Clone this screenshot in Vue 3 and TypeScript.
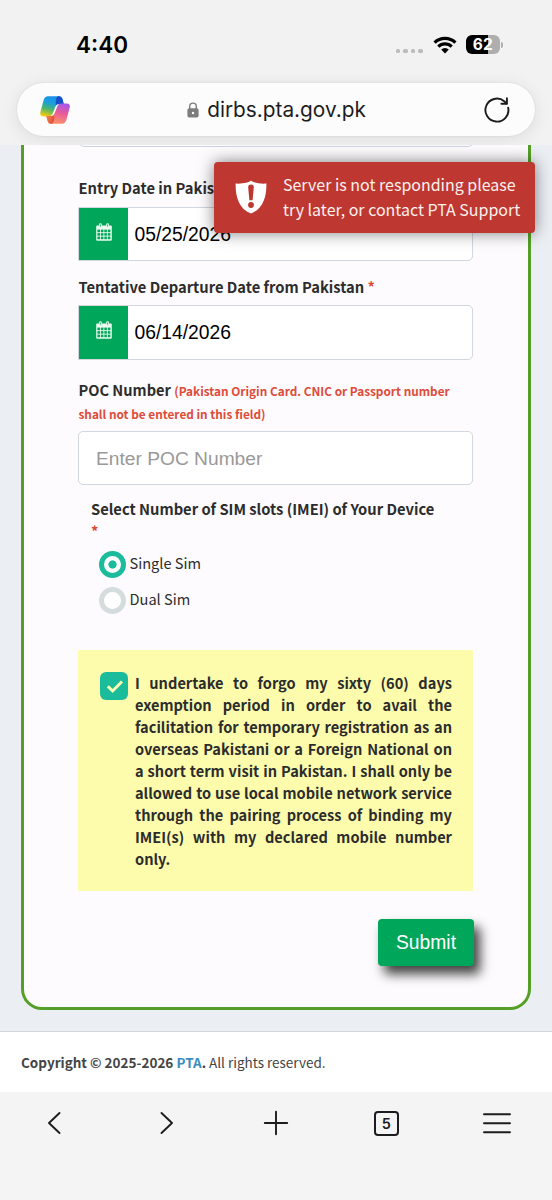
<script setup lang="ts">
import { ref } from 'vue'

interface DateField {
  label: string
  required: boolean
  value: string
}

const dateFields: DateField[] = [
  { label: 'Entry Date in Pakistan', required: true, value: '05/25/2026' },
  { label: 'Tentative Departure Date from Pakistan', required: true, value: '06/14/2026' },
]

const simOptions: string[] = ['Single Sim', 'Dual Sim']
const selectedSim = ref<string>('Single Sim')

const undertaking: string[] = [
  'I undertake to forgo my sixty (60) days',
  'exemption period in order to avail the',
  'facilitation for temporary registration as an',
  'overseas Pakistani or a Foreign National on',
  'a short term visit in Pakistan. I shall only be',
  'allowed to use local mobile network service',
  'through the pairing process of binding my',
  'IMEI(s) with my declared mobile number',
  'only.',
]
</script>

<template>
  <div class="screen">
    <header class="chrome">
      <div class="status">
        <span class="clock">4:40</span>
        <div class="indicators">
          <span class="dots"><i v-for="n in 4" :key="n"></i></span>
          <svg class="wifi" width="24" height="18" viewBox="0 0 24 18">
            <path d="M1.6 6.6A15 15 0 0 1 22.4 6.6" fill="none" stroke="#000" stroke-width="3.3" />
            <path d="M5.3 10.6A9.6 9.6 0 0 1 18.7 10.6" fill="none" stroke="#000" stroke-width="3.1" />
            <path d="M12 17.4L8.2 13.6A5.4 5.4 0 0 1 15.8 13.6Z" fill="#000" />
          </svg>
          <span class="battery"><b>62</b></span>
          <span class="nub"></span>
        </div>
      </div>
      <div class="address">
        <svg class="copilot" width="30" height="28" viewBox="0 0 91 85">
          <defs>
            <linearGradient id="cool" x1="0.6" y1="0" x2="0.3" y2="1">
              <stop offset="0" stop-color="#1b8fe8" />
              <stop offset="0.35" stop-color="#1a9fdc" />
              <stop offset="0.65" stop-color="#4cb66a" />
              <stop offset="1" stop-color="#f2cb10" />
            </linearGradient>
            <linearGradient id="warm" x1="0.75" y1="0" x2="0.4" y2="1">
              <stop offset="0" stop-color="#a456ea" />
              <stop offset="0.45" stop-color="#e85a9c" />
              <stop offset="1" stop-color="#ff9464" />
            </linearGradient>
            <linearGradient id="fold" x1="0" y1="0" x2="1" y2="0.4">
              <stop offset="0" stop-color="#f58a4a" />
              <stop offset="1" stop-color="#e2503c" />
            </linearGradient>
          </defs>
          <path d="M24 1H58Q66 1 69 12L72 24H57Q50 24 47 32L38 55Q35 62 26 62H10Q-2 61 1 49L11 12Q15 1 24 1Z" fill="url(#cool)" />
          <path d="M54 1H58Q66 1 69 12L72 24H57Q50 24 48 28Q46 8 54 1Z" fill="#1a4fc9" />
          <path d="M67 84H33Q25 84 22 73L19 61H34Q41 61 44 53L53 30Q56 23 65 23H81Q93 24 90 36L80 73Q76 84 67 84Z" fill="url(#warm)" />
          <path d="M37 84H33Q25 84 22 73L19 61H34Q41 61 43 57Q45 77 37 84Z" fill="url(#fold)" />
        </svg>
        <div class="url">
          <svg width="12" height="16" viewBox="0 0 12 16">
            <path d="M2.7 7V4.4a3.3 3.3 0 0 1 6.6 0V7" fill="none" stroke="#7d7d7f" stroke-width="1.4" />
            <rect x="0.4" y="6.2" width="11.2" height="9.4" rx="1.8" fill="#7d7d7f" />
            <circle cx="6" cy="11" r="1.2" fill="#fff" />
          </svg>
          <span>dirbs.pta.gov.pk</span>
        </div>
        <svg class="reload" width="28" height="28" viewBox="0 0 28 28" fill="none" stroke="#1c1c1e" stroke-width="1.9" stroke-linecap="round" stroke-linejoin="round">
          <path d="M25.2 11.8A11.5 11.5 0 1 1 21.2 5.2L23.7 7.6" />
          <path d="M23.9 2.2V7.8H18.4" />
        </svg>
      </div>
    </header>

    <main class="page">
      <section class="card">
        <div class="clipped-input"></div>

        <div v-for="field in dateFields" :key="field.label" class="field">
          <label class="label">{{ field.label }}<em v-if="field.required"> *</em></label>
          <div class="input-group">
            <span class="addon">
              <svg width="16" height="18" viewBox="0 0 16 18">
                <rect x="0.2" y="2.4" width="15.6" height="15.4" rx="1.2" fill="#e9f9ef" />
                <rect x="3" y="0.2" width="2.8" height="4.6" rx="1.3" fill="#e9f9ef" />
                <rect x="10.2" y="0.2" width="2.8" height="4.6" rx="1.3" fill="#e9f9ef" />
                <path d="M4.4 1.4v2.4M11.6 1.4v2.4" stroke="#00a65a" stroke-width="0.8" />
                <g fill="#00a65a">
                  <template v-for="row in 3" :key="row">
                    <rect v-for="col in 4" :key="col" :x="1.4 + (col - 1) * 3.45" :y="6.6 + (row - 1) * 3.5" width="2.6" height="2.6" />
                  </template>
                </g>
              </svg>
            </span>
            <span class="value">{{ field.value }}</span>
          </div>
        </div>

        <div class="poc">
          <div class="poc-label">
            <div><span class="poc-title">POC Number</span> <small>(Pakistan Origin Card. CNIC or Passport number</small></div>
            <div><small>shall not be entered in this field)</small></div>
          </div>
          <div class="text-input">Enter POC Number</div>
        </div>

        <div class="sim">
          <div class="sim-label">Select Number of SIM slots (IMEI) of Your Device</div>
          <div class="sim-star">*</div>
          <div v-for="option in simOptions" :key="option" class="radio" @click="selectedSim = option">
            <span class="ring" :class="{ on: selectedSim === option }"></span>
            <span class="option">{{ option }}</span>
          </div>
        </div>

        <div class="undertaking">
          <span class="check">
            <svg width="28" height="28" viewBox="0 0 28 28">
              <path d="M7.8 14.2L12.6 19L22 9.4" fill="none" stroke="#fdfcb0" stroke-width="2.9" />
            </svg>
          </span>
          <div class="terms">
            <p v-for="line in undertaking" :key="line">{{ line }}</p>
          </div>
        </div>

        <div class="actions">
          <button type="button" class="submit">Submit</button>
        </div>
      </section>

      <footer class="footer">
        <span><b>Copyright © 2025-2026 <a>PTA</a>.</b> All rights reserved.</span>
      </footer>

      <div class="toast">
        <svg width="32" height="34" viewBox="0 0 32 34">
          <path d="M16 0.6C18 2.6 24 4 31.4 3.6C31.6 17 28 28.5 16 33.6C4 28.5 0.4 17 0.6 3.6C8 4 14 2.6 16 0.6Z" fill="#fff" />
          <path d="M13.2 7.4a2.8 2.8 0 0 1 5.6 0L17.6 20.2h-3.2Z" fill="#bd362f" />
          <circle cx="16" cy="25" r="2.9" fill="#bd362f" />
        </svg>
        <div class="message">
          <div>Server is not responding please</div>
          <div class="second">try later, or contact PTA Support</div>
        </div>
      </div>
    </main>

    <nav class="toolbar">
      <span><svg width="24" height="26" viewBox="0 0 24 26"><path d="M16.5 3L6 13L16.5 23" /></svg></span>
      <span><svg width="24" height="26" viewBox="0 0 24 26"><path d="M7.5 3L18 13L7.5 23" /></svg></span>
      <span><svg width="26" height="26" viewBox="0 0 26 26"><path d="M1.8 13H24.2M13 1.8V24.2" /></svg></span>
      <span><i class="tabs">5</i></span>
      <span><svg width="28" height="26" viewBox="0 0 28 26"><path d="M1 4.2H27M1 13.2H27M1 22.2H27" /></svg></span>
    </nav>
  </div>
</template>

<style>
body {
  margin: 0;
}
</style>

<style scoped>
.screen {
  width: 552px;
  height: 1200px;
  display: flex;
  flex-direction: column;
  overflow: hidden;
  background: #f4f4f4;
  color: #2c2c2c;
  font-family: "Noto Sans CJK SC", "Open Sans", sans-serif;
  font-size: 14.6px;
}

.chrome {
  height: 145px;
  flex: none;
  box-sizing: border-box;
  background: #f3f2f3;
  overflow: hidden;
}

.status {
  height: 83px;
  display: flex;
  justify-content: space-between;
  align-items: flex-start;
  padding: 0 49px 0 76px;
  box-sizing: border-box;
  font-family: Inter, sans-serif;
}

.clock {
  font-size: 22.5px;
  line-height: 28px;
  margin-top: 31px;
  font-weight: 600;
  color: #000;
}

.indicators {
  display: flex;
  align-items: center;
  height: 20px;
  margin-top: 34.5px;
}

.dots {
  display: flex;
  gap: 3px;
  margin: 13px 10px 0 0;
}

.dots i {
  width: 4.5px;
  height: 4.5px;
  border-radius: 1.5px;
  background: #bdbcbd;
}

.wifi {
  margin-right: 9px;
}

.battery {
  width: 34.5px;
  height: 19px;
  border-radius: 6px;
  background: linear-gradient(90deg, #000 64%, #aeaeae 64%);
  color: #fff;
  font-size: 15.5px;
  line-height: 19.5px;
  text-align: center;
}

.battery b {
  font-weight: 700;
}

.nub {
  width: 2px;
  height: 6px;
  margin-left: 1px;
  border-radius: 0 2px 2px 0;
  background: #aeaeae;
}

.address {
  height: 53px;
  margin: 0 17px;
  box-sizing: border-box;
  padding: 0 24px 0 23px;
  border-radius: 27px;
  background: #fcfcfc;
  box-shadow: 0 0 2px rgba(0, 0, 0, 0.1), 0 3px 18px rgba(0, 0, 0, 0.09);
  display: flex;
  align-items: center;
  justify-content: space-between;
}

.url {
  display: flex;
  align-items: center;
  gap: 8px;
  font-family: Inter, sans-serif;
  font-size: 20.8px;
  line-height: 28px;
  color: #1c1c1e;
}

.page {
  position: relative;
  height: 947px;
  flex: none;
  display: flex;
  flex-direction: column;
  overflow: hidden;
  background: #ebeff4;
}

.card {
  height: 865px;
  flex: none;
  box-sizing: border-box;
  margin: 0 21px;
  padding: 0 55px 0 54.5px;
  border: 3px solid #549f26;
  border-top: 0;
  border-radius: 0 0 21px 21px;
  background: #fdfbfd;
}

.clipped-input {
  height: 7px;
  margin-top: -5px;
  margin-bottom: 31px;
  border: 1px solid #cdd3de;
  border-top: 0;
  border-radius: 0 0 5px 5px;
  box-sizing: border-box;
}

.field {
  height: 98.5px;
}

.label {
  display: block;
  height: 28.5px;
  line-height: 20px;
  font-size: 14.72px;
  font-weight: 700;
  white-space: nowrap;
}

.label em {
  font-style: normal;
  color: #dd4b39;
}

.input-group {
  display: flex;
  height: 54.5px;
  width: 395px;
  margin-left: -0.5px;
  box-sizing: border-box;
  border: 1.5px solid #d2d6de;
  border-radius: 0 5px 5px 0;
  background: #fff;
}

.addon {
  width: 49px;
  background: #00a65a;
  display: flex;
  justify-content: center;
  align-items: center;
  padding-bottom: 4px;
  box-sizing: border-box;
}

.value {
  padding-left: 6.5px;
  font-family: "Liberation Sans", Arial, sans-serif;
  font-size: 19.3px;
  line-height: 53px;
  color: #000;
}

.poc {
  padding-top: 4px;
}

.poc-label {
  font-weight: 700;
  line-height: 22px;
  height: 51.5px;
  white-space: nowrap;
}

.poc-label small {
  font-size: 11.8px;
  color: #dd4b39;
}

.text-input {
  height: 54.5px;
  width: 395px;
  margin-left: -0.5px;
  box-sizing: border-box;
  border: 1.5px solid #d2d6de;
  border-radius: 5px;
  background: #fff;
  padding-left: 17px;
  font-family: "Liberation Sans", Arial, sans-serif;
  font-size: 19.2px;
  line-height: 53px;
  color: #999;
}

.sim {
  padding: 13px 0 0 12.5px;
  white-space: nowrap;
}

.sim-label {
  font-size: 14.72px;
  font-weight: 700;
  line-height: 22px;
}

.sim-star {
  color: #dd4b39;
  font-weight: 700;
  line-height: 22px;
  height: 26px;
}

.radio {
  height: 36px;
  padding-left: 8px;
  display: flex;
  align-items: center;
  gap: 3.5px;
}

.option {
  padding-bottom: 3px;
}

.ring {
  width: 27px;
  height: 27px;
  box-sizing: border-box;
  border-radius: 50%;
  border: 5.5px solid #d5dcde;
  background: #fff;
}

.ring.on {
  border-color: #1abc9c;
  background: radial-gradient(circle, #1abc9c 3.7px, #fff 4.5px);
}

.undertaking {
  width: 395px;
  height: 241px;
  margin: 32px 0 0 -0.5px;
  box-sizing: border-box;
  padding: 22px 0 0 22px;
  background: #fdfcac;
  display: flex;
}

.check {
  width: 28px;
  height: 28px;
  border-radius: 6px;
  background: #1abc9c;
  display: flex;
}

.terms {
  width: 317px;
  margin-left: 7px;
  margin-top: -0.5px;
  font-weight: 700;
}

.terms p {
  margin: 0;
  line-height: 22px;
  white-space: nowrap;
  text-align: justify;
  text-align-last: justify;
}

.terms p:last-child {
  text-align-last: left;
}

.actions {
  display: flex;
  justify-content: flex-end;
  margin-top: 28px;
  margin-right: -1px;
}

.submit {
  width: 96px;
  height: 47px;
  padding: 0;
  border: 0;
  border-radius: 4px;
  background: #00a65a;
  color: #fff;
  font-family: "Liberation Sans", Arial, sans-serif;
  font-size: 19.3px;
  box-shadow: 6px 8px 12px rgba(0, 0, 0, 0.75);
}

.footer {
  height: 61px;
  flex: none;
  margin-top: 21px;
  box-sizing: border-box;
  border-top: 1.5px solid #d2d6de;
  background: #fff;
  padding: 0 21px 1px;
  display: flex;
  align-items: center;
  color: #444;
  font-size: 13.5px;
  white-space: nowrap;
}

.footer a {
  color: #3c8dbc;
}

.toast {
  position: absolute;
  top: 17px;
  left: 214px;
  width: 321px;
  height: 71px;
  box-sizing: border-box;
  padding: 0 0 1.5px 21px;
  border-radius: 4px;
  background: #be3731;
  box-shadow: 0 0 16px rgba(0, 0, 0, 0.5);
  display: flex;
  align-items: center;
  color: #fdf1ee;
  font-size: 15.97px;
  line-height: 24.5px;
  white-space: nowrap;
}

.message {
  margin-left: 16px;
}

.toolbar {
  height: 108px;
  flex: none;
  display: grid;
  grid-template-columns: repeat(5, 1fr);
  align-items: start;
  padding-top: 18px;
  box-sizing: border-box;
  background: #f4f4f4;
}

.toolbar span {
  display: flex;
  height: 26px;
  justify-content: center;
  align-items: center;
}

.toolbar svg {
  fill: none;
  stroke: #1c1c1e;
  stroke-width: 1.9;
  stroke-linecap: round;
  stroke-linejoin: round;
}

.tabs {
  width: 25px;
  height: 25px;
  box-sizing: border-box;
  border: 2px solid #1c1c1e;
  border-radius: 4px;
  font: 600 14.5px/21px Inter, sans-serif;
  text-align: center;
  color: #1c1c1e;
}
</style>
